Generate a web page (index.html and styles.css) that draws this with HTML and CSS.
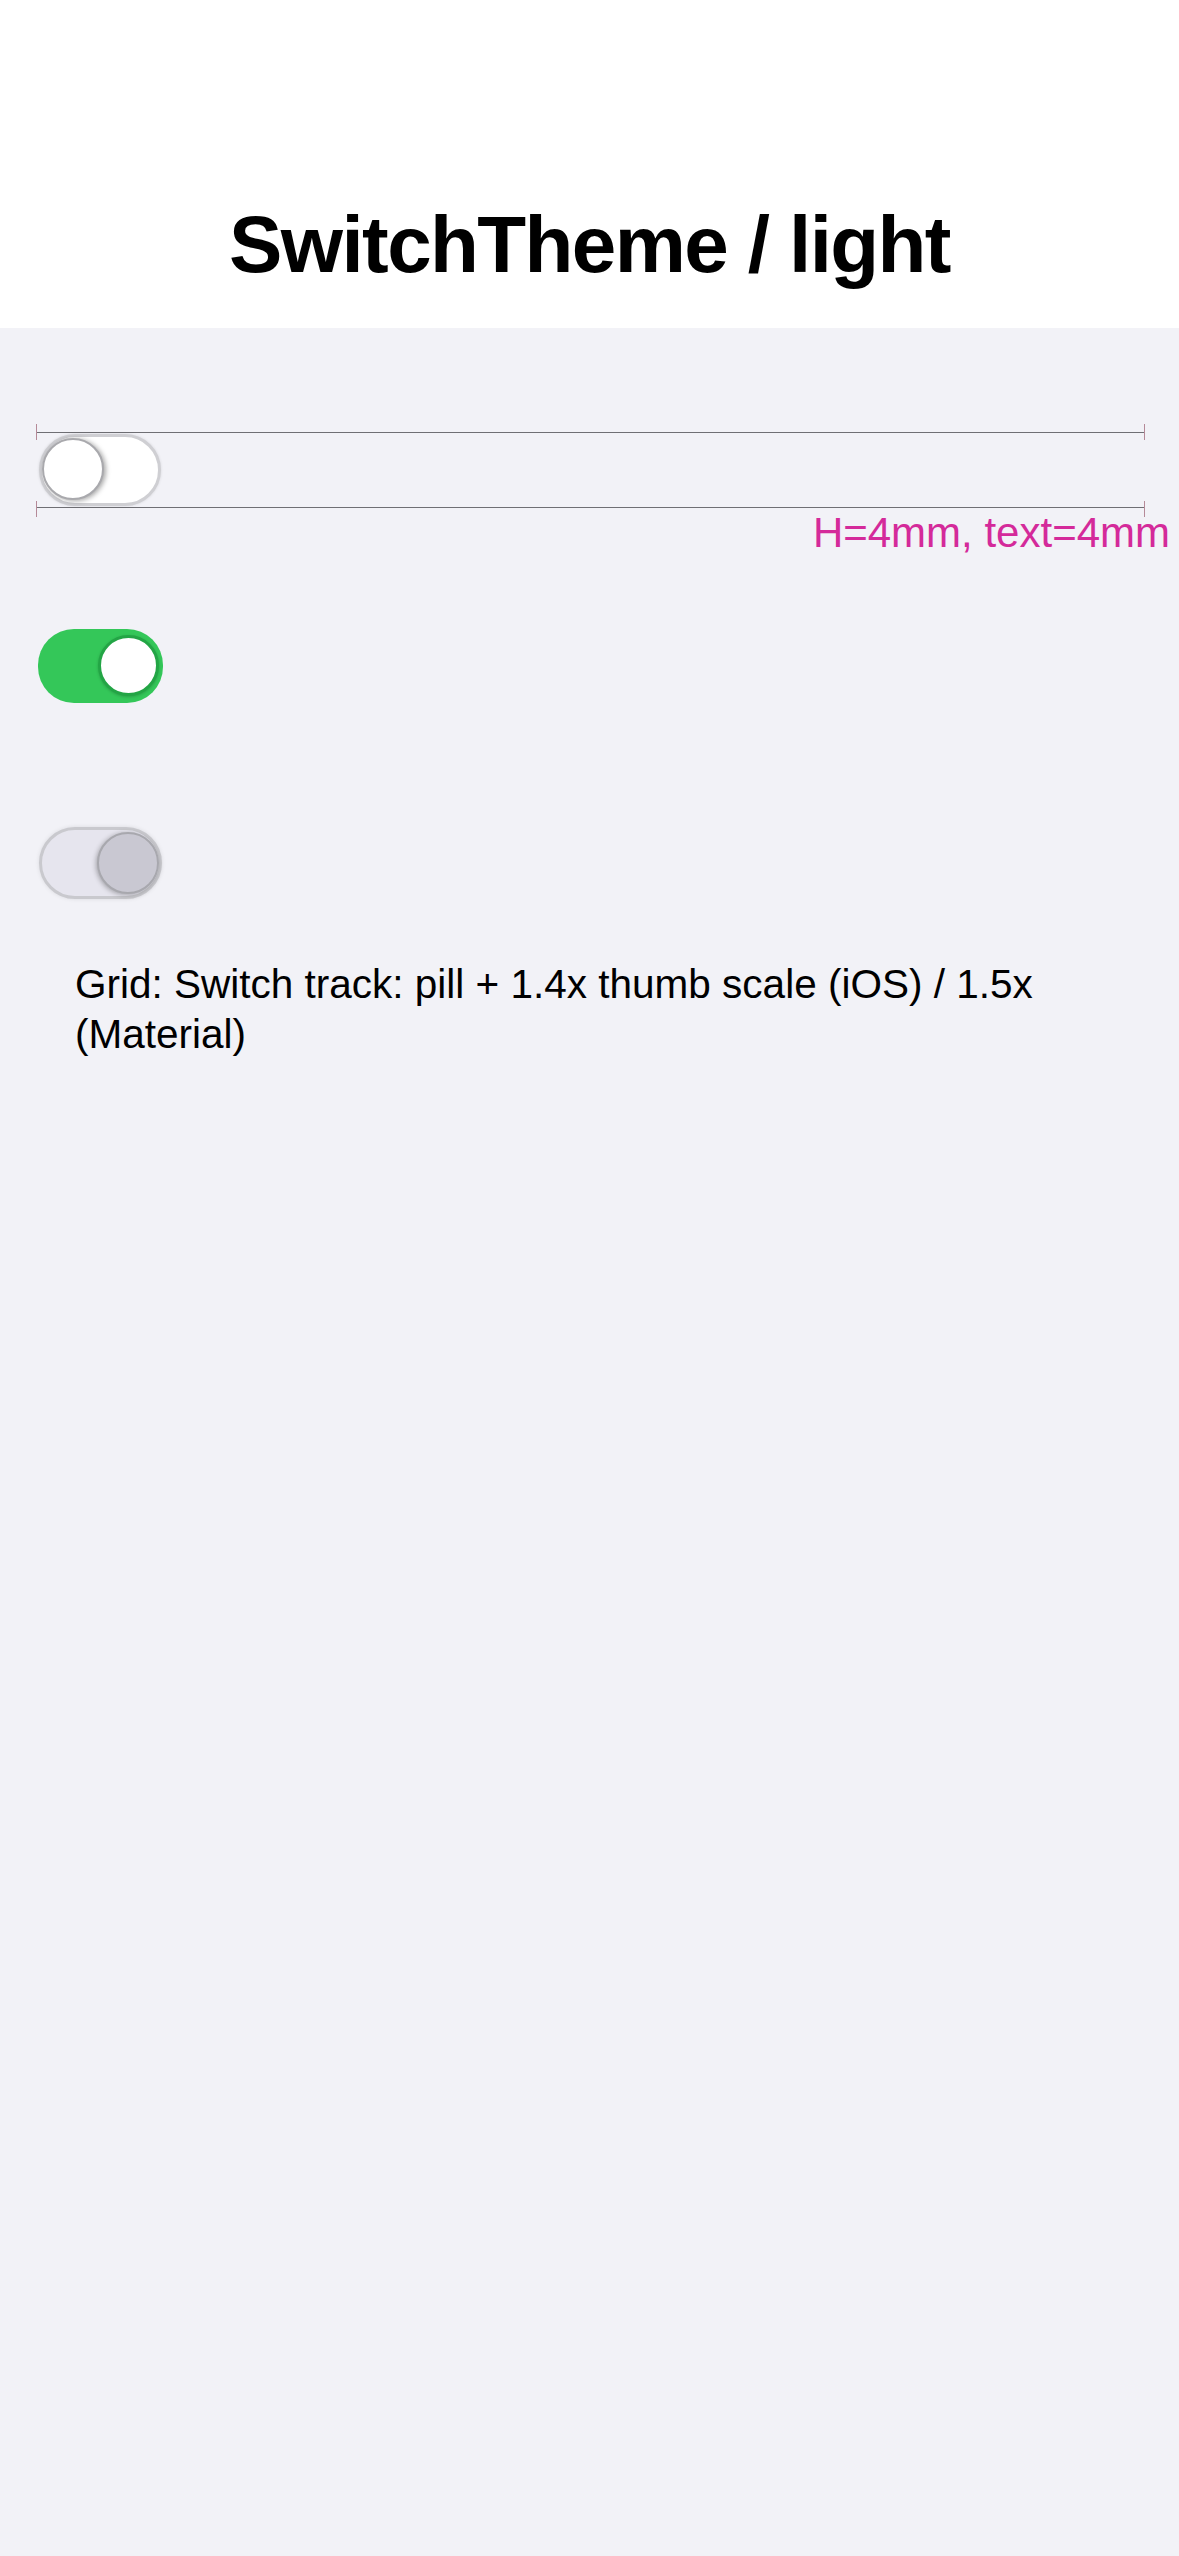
FILE: index.html
```html
<!DOCTYPE html>
<html lang="en">
<head>
    <meta charset="UTF-8">
    <meta name="viewport" content="width=device-width, initial-scale=1.0">
    <title>SwitchTheme / light</title>
    <link rel="stylesheet" href="styles.css">
</head>
<body>
    <header class="header">
        <h1>SwitchTheme / light</h1>
    </header>

    <main class="content">
        <!-- switch with size guides -->
        <div class="guide-row">
            <div class="guide-box">
                <span class="tick tick-tl"></span>
                <span class="tick tick-bl"></span>
                <span class="tick tick-tr"></span>
                <span class="tick tick-br"></span>
                <div class="switch switch-off">
                    <div class="thumb"></div>
                </div>
            </div>
            <div class="guide-label">H=4mm, text=4mm</div>
        </div>

        <div class="switch switch-on">
            <div class="thumb"></div>
        </div>

        <div class="switch switch-disabled">
            <div class="thumb"></div>
        </div>

        <p class="caption">Grid: Switch track: pill + 1.4x thumb scale (iOS) / 1.5x (Material)</p>
    </main>
</body>
</html>
```

FILE: styles.css
```css
body {
    font-family: "Liberation Sans", Arial, sans-serif;
    margin: 0;
    padding: 0;
    background-color: #f2f2f7;
    color: #000;
    min-height: 2556px;
}
.header {
    background-color: #fff;
    height: 328px;
    box-sizing: border-box;
    padding-top: 197px;
}
.header h1 {
    margin: 0;
    font-size: 80px;
    line-height: 96px;
    font-weight: bold;
    letter-spacing: -1.6px;
    text-align: center;
}
.content {
    padding: 0 0 0 36px;
}

/* guides around first switch */
.guide-row {
    width: 1134px;
    padding-top: 104px;
}
.guide-box {
    position: relative;
    width: 1106px;
    height: 73px;
    border-top: 1px solid #6f6f74;
    border-bottom: 1px solid #6f6f74;
    padding-top: 1px;
    padding-left: 3px;
    box-sizing: content-box;
}
.tick {
    position: absolute;
    width: 1px;
    height: 16px;
    background-color: #b58a98;
}
.tick-tl { left: 0; top: -9px; }
.tick-bl { left: 0; bottom: -10px; }
.tick-tr { right: 0; top: -9px; }
.tick-br { right: 0; bottom: -10px; }
.guide-label {
    margin-top: 1px;
    text-align: right;
    font-size: 42px;
    line-height: 48px;
    color: #d42a9a;
}

/* switches */
.switch {
    position: relative;
    width: 124px;
    height: 72px;
    border-radius: 36px;
    box-sizing: border-box;
}
.switch .thumb {
    position: absolute;
    top: 5px;
    width: 62px;
    height: 62px;
    border-radius: 50%;
    box-sizing: border-box;
}
.switch-off {
    width: 122px;
    background-color: #fff;
    border: 3px solid #cfcfd3;
    box-shadow: 0 0 3px rgba(0, 0, 0, 0.12);
}
.switch-off .thumb {
    top: 1px;
    left: 0;
    background-color: #fff;
    border: 2px solid #a9a9ad;
    box-shadow: 2px 1px 5px rgba(0, 0, 0, 0.35);
}
.switch-on {
    margin-top: 72px;
    margin-left: 2px;
    height: 74px;
    width: 125px;
    background-color: #34c759;
}
.switch-on .thumb {
    top: 6px;
    right: 4px;
    width: 61px;
    height: 61px;
    background-color: #fff;
    border: 3px solid #23a545;
    box-shadow: 0 1px 3px rgba(0, 0, 0, 0.2);
}
.switch-disabled {
    margin-top: 124px;
    margin-left: 3px;
    width: 123px;
    background-color: #e6e5ee;
    border: 3px solid #c9c9ce;
    box-shadow: 0 0 4px rgba(0, 0, 0, 0.1);
}
.switch-disabled .thumb {
    top: 2px;
    right: 0;
    background-color: #c9c8d2;
    border: 2px solid #a8a8ae;
    box-shadow: -1px 1px 5px rgba(0, 0, 0, 0.3);
}
.caption {
    margin: 60px 0 0;
    padding: 0 70px 0 39px;
    font-size: 40.5px;
    line-height: 50px;
}
```
